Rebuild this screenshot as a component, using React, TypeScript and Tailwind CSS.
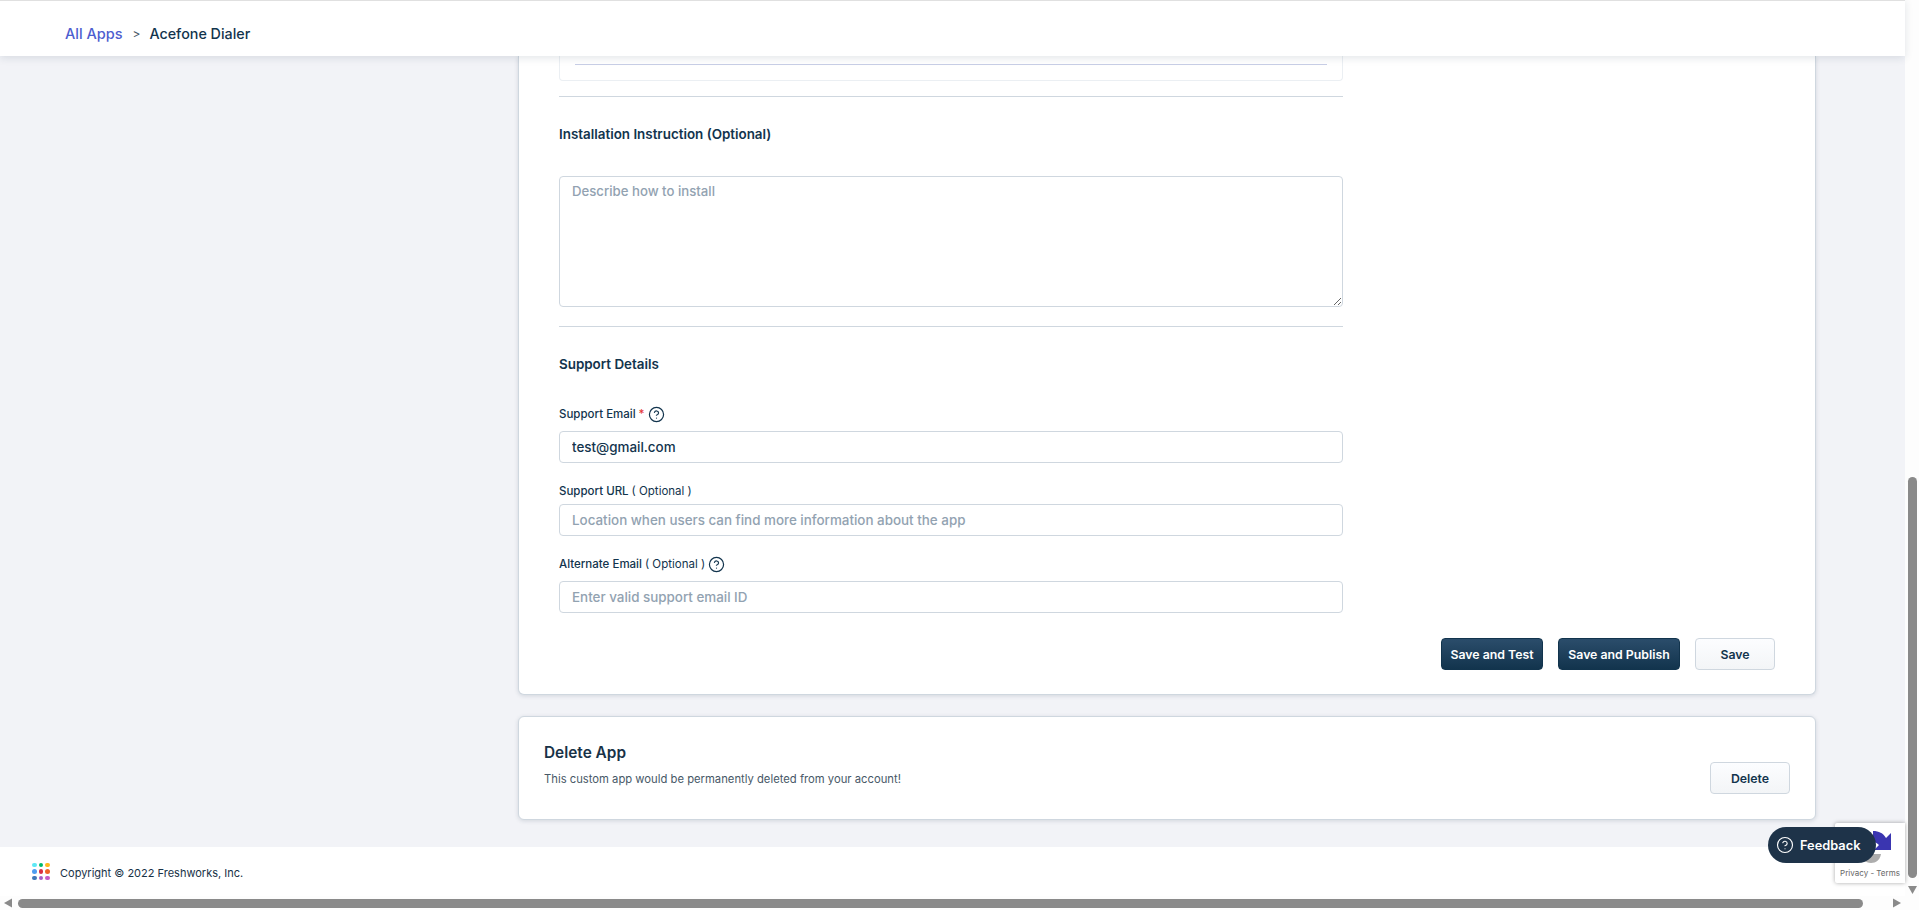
import React from "react";
import { CircleHelp } from "lucide-react";

const font = { fontFamily: "Inter, 'Liberation Sans', sans-serif" };

function Help() {
  return <CircleHelp size={17} strokeWidth={1.7} className="text-[#12344d]" />;
}

const inputCls =
  "block w-full h-[32px] rounded-[4px] border border-[#cfd7df] bg-white px-[12px] text-[13.4px] font-medium text-[#12344d] placeholder:text-[#92a2b1] outline-none";

function Btn({ w, primary, children }: { w: string; primary?: boolean; children: React.ReactNode }) {
  return (
    <button
      className={
        primary
          ? `${w} h-[32px] rounded-[4px] border border-[#12344d] bg-gradient-to-b from-[#2b4d6b] to-[#12344d] pt-[2px] text-[12.3px] font-semibold text-white`
          : `${w} h-[32px] rounded-[4px] border border-[#cfd7df] bg-gradient-to-b from-[#fcfdff] to-[#f3f5f7] pt-[2px] text-[12.3px] font-semibold text-[#12344d]`
      }
    >
      {children}
    </button>
  );
}

const dots = ["#5ee8f5", "#00b96b", "#ffb81c", "#4f9df0", "#d92f45", "#f0642a", "#3f78b8", "#a65cc8", "#c65cc8"];

function Divider() {
  return <div className="h-px bg-[#cfd7df]" />;
}

export default function App() {
  return (
    <div style={font} className="relative flex h-screen w-full flex-col overflow-hidden bg-white text-[#12344d]">
      <div className="flex min-h-0 flex-1">
        <div className="flex min-w-0 flex-1 flex-col">
          <header className="relative z-10 flex h-[56px] items-center border-t border-[#e0e0e0] bg-white pt-[10px] pl-[65px] shadow-[0_2px_8px_rgba(24,50,71,0.12)]">
            <span className="text-[14.5px] font-medium text-[#4d5dcf]">All Apps</span>
            <span className="ml-[10px] text-[12px] text-[#475867]">&gt;</span>
            <span className="ml-[9px] text-[14.3px] font-medium text-[#12344d]">Acefone Dialer</span>
          </header>

          <main className="min-h-0 flex-1 overflow-hidden bg-[#f2f3f7] pl-[518px]">
            <div className="w-[1298px] rounded-b-[6px] border-x border-b border-[#cfd7df] bg-white px-[40px] pb-[24px] shadow-[0_1px_4px_rgba(24,50,71,0.15)]">
              <div className="w-[784px]">
                <div className="h-[25px] rounded-b-[4px] border-x border-b border-[#ebeff3] px-[15px] pt-[8px]">
                  <div className="h-px bg-[#c8cee6]" />
                </div>
                <div className="mt-[15px]"><Divider /></div>
                <h3 className="mt-[27px] h-[20px] text-[13.4px] leading-[20px] font-semibold">Installation Instruction (Optional)</h3>
                <textarea
                  placeholder="Describe how to install"
                  className="mt-[32px] block h-[131px] w-full rounded-[4px] border border-[#cfd7df] bg-white px-[12px] py-[5px] text-[13.2px] font-medium placeholder:text-[#92a2b1] outline-none"
                />
                <div className="mt-[19px]"><Divider /></div>
                <h3 className="mt-[27px] h-[20px] text-[13.4px] leading-[20px] font-semibold">Support Details</h3>

                <label className="mt-[30px] flex h-[20px] items-center text-[11.5px] font-medium">
                  <span className="pt-[2px]">Support Email<span className="ml-[3px] text-[#e43538]">*</span></span>
                  <span className="ml-[3px]"><Help /></span>
                </label>
                <input className={`mt-[7px] ${inputCls}`} defaultValue="test@gmail.com" />

                <label className="mt-[18px] flex h-[20px] items-center text-[11.5px] font-medium">
                  <span className="pt-[2px]">Support URL<span className="ml-[3px] font-normal">( Optional )</span></span>
                </label>
                <input className={`mt-[3px] ${inputCls}`} placeholder="Location when users can find more information about the app" />

                <label className="mt-[18px] flex h-[20px] items-center text-[11.5px] font-medium">
                  <span className="pt-[2px]">Alternate Email<span className="ml-[3px] font-normal">( Optional )</span></span>
                  <span className="ml-[3px]"><Help /></span>
                </label>
                <input className={`mt-[7px] ${inputCls}`} placeholder="Enter valid support email ID" />
              </div>

              <div className="mt-[25px] flex justify-end gap-[15px]">
                <Btn w="w-[102px]" primary>Save and Test</Btn>
                <Btn w="w-[122px]" primary>Save and Publish</Btn>
                <Btn w="w-[80px]">Save</Btn>
              </div>
            </div>

            <div className="mt-[21px] flex h-[104px] w-[1298px] items-end justify-between rounded-[6px] border border-[#cfd7df] bg-white pr-[25px] pb-[25px] pl-[25px] shadow-[0_1px_4px_rgba(24,50,71,0.15)]">
              <div className="self-start pt-[26px]">
                <div className="text-[15.4px] leading-[20px] font-semibold text-[#183247]">Delete App</div>
                <div className="mt-[7px] text-[11.25px] leading-[18px] text-[#475867]">This custom app would be permanently deleted from your account!</div>
              </div>
              <Btn w="w-[80px]">Delete</Btn>
            </div>
          </main>

          <footer className="flex h-[49px] items-center bg-white pl-[32px]">
            <div className="grid w-[18px] grid-cols-3 gap-[2px]">
              {dots.map((c) => (
                <span key={c} className="h-[4.6px] w-[4.6px] rounded-full" style={{ backgroundColor: c }} />
              ))}
            </div>
            <span className="ml-[10px] pt-[4px] text-[11px] text-[#183247]">Copyright © 2022 Freshworks, Inc.</span>
          </footer>
        </div>

        <div className="flex w-[14px] shrink-0 flex-col items-end bg-[#fdfdfd]">
          <div className="h-[477px] shrink-0" />
          <div className="mr-[2px] h-[401px] w-[9px] rounded-full bg-[#8a8a8a]" />
          <svg width="14" height="14" viewBox="0 0 14 14" className="mt-[4px]">
            <path d="M3 4h9L7.5 12z" fill="#8a8a8a" />
          </svg>
        </div>
      </div>

      <div className="flex h-[14px] shrink-0 items-center bg-[#fdfdfd] pr-[14px]">
        <svg width="14" height="14" viewBox="0 0 14 14" className="shrink-0">
          <path d="M12 2.5v9L4 7z" fill="#8a8a8a" />
        </svg>
        <div className="ml-[4px] h-[9px] w-[1845px] rounded-full bg-[#8a8a8a]" />
        <svg width="14" height="14" viewBox="0 0 14 14" className="ml-[26px] shrink-0">
          <path d="M4 2.5v9L12 7z" fill="#8a8a8a" />
        </svg>
      </div>

      {/* reCAPTCHA badge */}
      <div className="absolute top-[823px] left-[1835px] flex h-[60px] w-[70px] flex-col items-center overflow-hidden rounded-l-[2px] bg-white shadow-[0_0_4px_rgba(0,0,0,0.35)]">
        <svg width="44" height="44" viewBox="0 0 44 44" className="mt-[2px] ml-[8px] shrink-0">
          <path d="M39 8v17H22l5-5c-2-2-4-3-6-3V6c6 0 10 2 13 7z" fill="#3a35b0" />
          <path d="M11 29h14l4 0c-1 6-5 9-10 9-6 0-9-4-11-9z" fill="#adadad" />
        </svg>
        <div className="absolute bottom-[5px] left-0 w-full text-center text-[8px] leading-[10px] text-[#666]">Privacy - Terms</div>
      </div>

      {/* Feedback */}
      <div className="absolute top-[827px] left-[1768px] flex h-[36px] w-[108px] items-center rounded-full bg-[#1e3349] pl-[8px] text-[12.8px] font-semibold text-white">
        <CircleHelp size={18} strokeWidth={1.5} />
        <span className="ml-[6px] pt-[1px]">Feedback</span>
      </div>
    </div>
  );
}
